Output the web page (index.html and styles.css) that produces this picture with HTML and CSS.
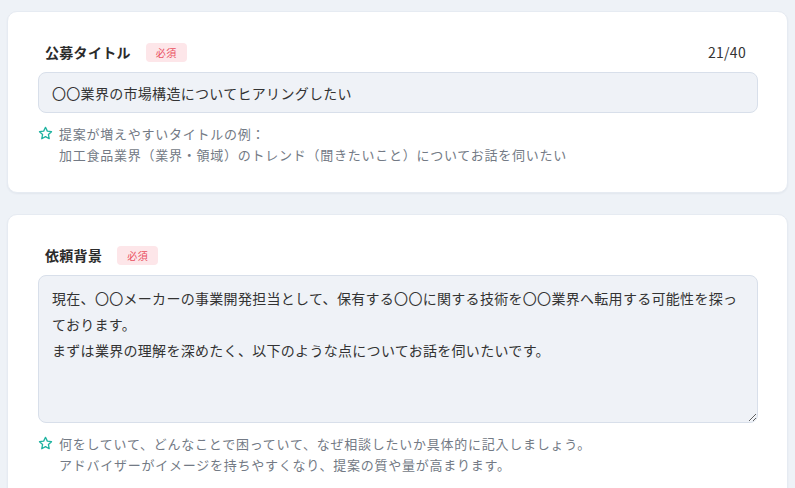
FILE: index.html
```html
<!DOCTYPE html>
<html lang="ja">
<head>
<meta charset="utf-8">
<link rel="stylesheet" href="styles.css">
</head>
<body>
<div class="page">
  <section class="card">
    <div class="field-head">
      <div class="label-group">
        <span class="label">公募タイトル</span>
        <span class="badge">必須</span>
      </div>
      <span class="counter">21/40</span>
    </div>
    <input class="input" type="text" value="〇〇業界の市場構造についてヒアリングしたい">
    <div class="hint">
      <svg class="star" viewBox="0 0 16 16" width="15" height="15"><path d="M8 1.4l1.95 4.1 4.45.55-3.28 3.08.85 4.42L8 11.4l-3.970 2.15.85-4.42L1.6 6.05l4.45-.55z" fill="none" stroke="#1fb3a0" stroke-width="1.4" stroke-linejoin="round"/></svg>
      <div class="hint-text">提案が増えやすいタイトルの例：<br>加工食品業界（業界・領域）のトレンド（聞きたいこと）についてお話を伺いたい</div>
    </div>
  </section>
  <section class="card">
    <div class="field-head">
      <div class="label-group">
        <span class="label">依頼背景</span>
        <span class="badge">必須</span>
      </div>
    </div>
    <textarea class="textarea">現在、〇〇メーカーの事業開発担当として、保有する〇〇に関する技術を〇〇業界へ転用する可能性を探っております。
まずは業界の理解を深めたく、以下のような点についてお話を伺いたいです。</textarea>
    <div class="hint">
      <svg class="star" viewBox="0 0 16 16" width="15" height="15"><path d="M8 1.4l1.95 4.1 4.45.55-3.28 3.08.85 4.42L8 11.4l-3.97 2.15.85-4.42L1.6 6.05l4.45-.55z" fill="none" stroke="#1fb3a0" stroke-width="1.4" stroke-linejoin="round"/></svg>
      <div class="hint-text">何をしていて、どんなことで困っていて、なぜ相談したいか具体的に記入しましょう。<br>アドバイザーがイメージを持ちやすくなり、提案の質や量が高まります。</div>
    </div>
  </section>
</div>
</body>
</html>
```

FILE: styles.css
```css
* { box-sizing: border-box; }
html, body {
  margin: 0;
  height: 100%;
  overflow: hidden;
  background: #eef2f7;
}
body {
  font-family: "Noto Sans CJK JP", "Noto Sans", sans-serif;
  color: #333;
}
.page {
  padding: 11px 7px;
  display: flex;
  flex-direction: column;
  gap: 21px;
}
.card {
  background: #fff;
  border-radius: 10px;
  padding: 30px 29px 27px 30px;
  box-shadow: 0 1px 2px rgba(30, 50, 90, 0.06);
  border: 1px solid #e6ebf2;
}
.field-head {
  display: flex;
  justify-content: space-between;
  align-items: center;
  height: 20px;
  padding: 0 12px 0 7px;
  margin-bottom: 10px;
}
.label-group {
  display: flex;
  align-items: center;
  gap: 15px;
}
.label {
  font-size: 14px;
  font-weight: 700;
  letter-spacing: 0.3px;
  color: #2b2b2b;
}
.badge {
  display: inline-block;
  height: 19px;
  line-height: 19px;
  padding: 0 10px;
  border-radius: 4px;
  background: #fde6e9;
  color: #e9505f;
  font-size: 10px;
  letter-spacing: 0.5px;
}
.counter {
  font-size: 14px;
  color: #333;
  letter-spacing: 0.3px;
}
.input, .textarea {
  display: block;
  width: 100%;
  background: #eff2f7;
  border: 1px solid #d8dfea;
  border-radius: 8px;
  font-family: inherit;
  color: #333;
  font-size: 14px;
  letter-spacing: 0.3px;
  outline: none;
}
.input {
  height: 41px;
  padding: 0 13px;
}
.textarea {
  height: 148px;
  padding: 9px 13px;
  line-height: 26px;
  resize: vertical;
  overflow: hidden;
}
.hint {
  display: flex;
  align-items: flex-start;
  gap: 6px;
  margin-top: 10px;
  padding-left: 0;
}
.star {
  flex: none;
  margin-top: 3px;
}
.hint-text {
  font-size: 13px;
  line-height: 21px;
  letter-spacing: 0.75px;
  color: #737a85;
}
```
